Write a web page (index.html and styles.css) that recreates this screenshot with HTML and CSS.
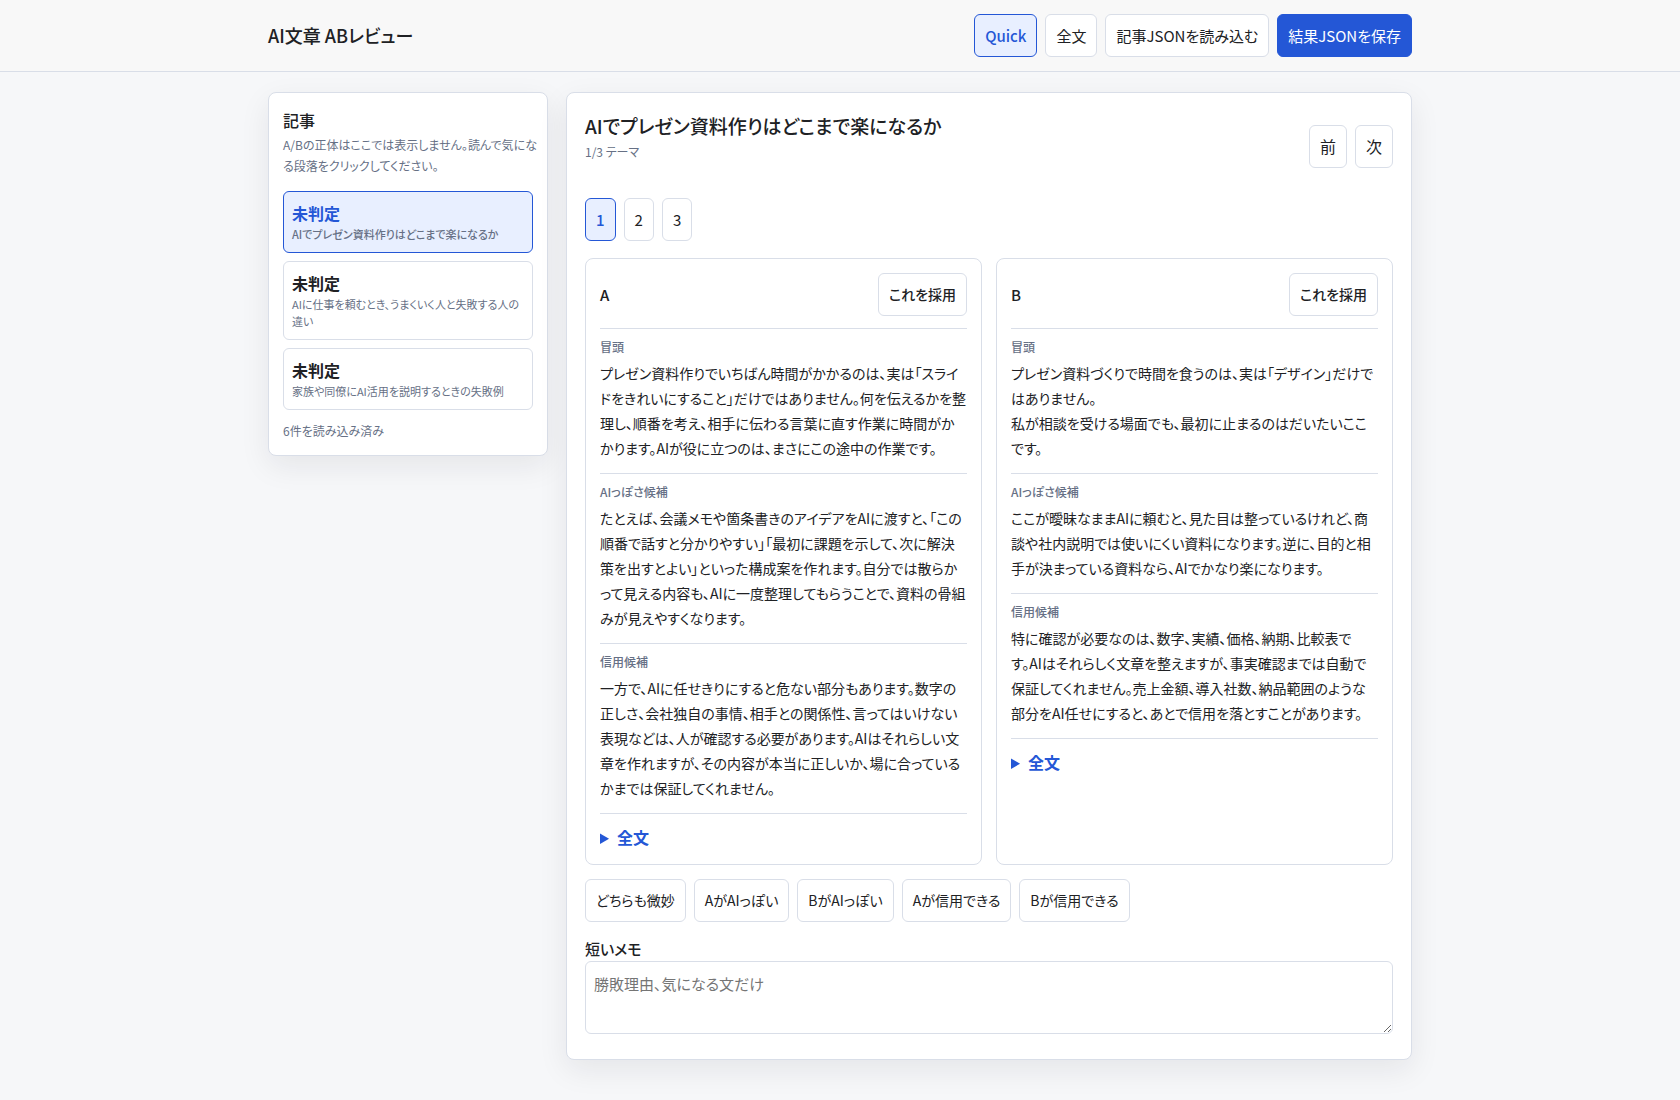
FILE: index.html
```html
<!DOCTYPE html>
<html lang="ja">
<head>
    <meta charset="UTF-8">
    <meta name="viewport" content="width=device-width, initial-scale=1">
    <title>AI文章 ABレビュー</title>
    <link rel="stylesheet" href="styles.css">
</head>
<body>
<header class="topbar">
    <div class="topbar-inner">
        <h1>AI文章 ABレビュー</h1>
        <div class="toolbar">
            <button type="button" class="active">Quick</button>
            <button type="button">全文</button>
            <button type="button">記事JSONを読み込む</button>
            <button type="button" class="primary">結果JSONを保存</button>
        </div>
    </div>
</header>

<main class="layout">
    <!-- Article list -->
    <aside class="panel sidebar">
        <h2>記事</h2>
        <p class="muted">A/Bの正体はここでは表示しません。読んで気にな<br>る段落をクリックしてください。</p>
        <div class="article-list">
            <button type="button" class="article active">
                <strong>未判定</strong>
                <span>AIでプレゼン資料作りはどこまで楽になるか</span>
            </button>
            <button type="button" class="article">
                <strong>未判定</strong>
                <span>AIに仕事を頼むとき、うまくいく人と失敗する人の<br>違い</span>
            </button>
            <button type="button" class="article">
                <strong>未判定</strong>
                <span>家族や同僚にAI活用を説明するときの失敗例</span>
            </button>
        </div>
        <p class="muted">6件を読み込み済み</p>
    </aside>

    <!-- Review area -->
    <section class="panel review">
        <div class="review-head">
            <div class="review-title">
                <h2>AIでプレゼン資料作りはどこまで楽になるか</h2>
                <p class="muted">1/3 テーマ</p>
            </div>
            <div class="toolbar">
                <button type="button">前</button>
                <button type="button">次</button>
            </div>
        </div>

        <div class="toolbar pager">
            <button type="button" class="active">1</button>
            <button type="button">2</button>
            <button type="button">3</button>
        </div>

        <div class="compare">
            <article class="version">
                <div class="version-head">
                    <h3>A</h3>
                    <button type="button">これを採用</button>
                </div>
                <div class="block">
                    <div class="block-label">冒頭</div>
                    <p>プレゼン資料作りでいちばん時間がかかるのは、実は「スライドをきれいにすること」だけではありません。何を伝えるかを整理し、順番を考え、相手に伝わる言葉に直す作業に時間がかかります。AIが役に立つのは、まさにこの途中の作業です。</p>
                </div>
                <div class="block">
                    <div class="block-label">AIっぽさ候補</div>
                    <p>たとえば、会議メモや箇条書きのアイデアをAIに渡すと、「この順番で話すと分かりやすい」「最初に課題を示して、次に解決策を出すとよい」といった構成案を作れます。自分では散らかって見える内容も、AIに一度整理してもらうことで、資料の骨組みが見えやすくなります。</p>
                </div>
                <div class="block">
                    <div class="block-label">信用候補</div>
                    <p>一方で、AIに任せきりにすると危ない部分もあります。数字の<br>正しさ、会社独自の事情、相手との関係性、言ってはいけない<br>表現などは、人が確認する必要があります。AIはそれらしい文<br>章を作れますが、その内容が本当に正しいか、場に合っているかまでは保証してくれません。</p>
                </div>
                <details>
                    <summary>全文</summary>
                </details>
            </article>

            <article class="version">
                <div class="version-head">
                    <h3>B</h3>
                    <button type="button">これを採用</button>
                </div>
                <div class="block">
                    <div class="block-label">冒頭</div>
                    <p>プレゼン資料づくりで時間を食うのは、実は「デザイン」だけではありません。<br>私が相談を受ける場面でも、最初に止まるのはだいたいここです。</p>
                </div>
                <div class="block">
                    <div class="block-label">AIっぽさ候補</div>
                    <p>ここが曖昧なままAIに頼むと、見た目は整っているけれど、商談や社内説明では使いにくい資料になります。逆に、目的と相手が決まっている資料なら、AIでかなり楽になります。</p>
                </div>
                <div class="block">
                    <div class="block-label">信用候補</div>
                    <p>特に確認が必要なのは、数字、実績、価格、納期、比較表で<br>す。AIはそれらしく文章を整えますが、事実確認までは自動で<br>保証してくれません。売上金額、導入社数、納品範囲のような<br>部分をAI任せにすると、あとで信用を落とすことがあります。</p>
                </div>
                <details>
                    <summary>全文</summary>
                </details>
            </article>
        </div>

        <div class="toolbar verdicts">
            <button type="button">どちらも微妙</button>
            <button type="button">AがAIっぽい</button>
            <button type="button">BがAIっぽい</button>
            <button type="button">Aが信用できる</button>
            <button type="button">Bが信用できる</button>
        </div>

        <label class="memo-label" for="memo">短いメモ</label>
        <textarea id="memo" placeholder="勝敗理由、気になる文だけ"></textarea>
    </section>
</main>
</body>
</html>
```

FILE: styles.css
```css
:root {
    --bg: #f6f7f9;
    --panel: #ffffff;
    --text: #202124;
    --muted: #667085;
    --line: #d9dee8;
    --accent: #2457d6;
    --accent-soft: #e8efff;
}

* {
    box-sizing: border-box;
}

body {
    margin: 0;
    background: var(--bg);
    color: var(--text);
    font-family: "Noto Sans CJK JP", sans-serif;
    font-feature-settings: "palt";
    font-size: 15px;
    line-height: 25px;
}

h1,
h2,
h3,
p {
    margin: 0;
}

button,
textarea {
    font: inherit;
    font-feature-settings: inherit;
    color: inherit;
}

button {
    padding: 8px 10px;
    border: 1px solid var(--line);
    border-radius: 6px;
    background: var(--panel);
    cursor: pointer;
}

button.active {
    border-color: var(--accent);
    background: var(--accent-soft);
    color: var(--accent);
    font-weight: 500;
}

button.primary {
    border-color: var(--accent);
    background: var(--accent);
    color: #fff;
}

.muted {
    color: var(--muted);
    font-size: 12px;
    line-height: 21px;
    white-space: nowrap;
}

.toolbar {
    display: flex;
    flex-wrap: wrap;
    gap: 8px;
}

/* Header */
.topbar {
    border-bottom: 1px solid var(--line);
    background: #f8f8f8;
}

.topbar-inner {
    display: flex;
    align-items: center;
    justify-content: space-between;
    gap: 16px;
    max-width: 1180px;
    margin: 0 auto;
    padding: 14px 18px;
}

.topbar h1 {
    font-size: 18px;
    font-weight: 500;
}

.layout {
    display: grid;
    grid-template-columns: 280px minmax(0, 1fr);
    align-items: start;
    gap: 18px;
    max-width: 1180px;
    margin: 0 auto;
    padding: 20px 18px 40px;
}

.panel {
    border: 1px solid var(--line);
    border-radius: 8px;
    background: var(--panel);
    box-shadow: 0 10px 30px rgba(20, 24, 32, 0.08);
}

/* Sidebar */
.sidebar {
    padding: 14px;
}

.sidebar h2 {
    font-size: 16px;
    font-weight: 500;
    line-height: 27px;
}

.article-list {
    display: grid;
    gap: 8px;
    margin: 15px 0 10px;
}

.article {
    display: block;
    width: 100%;
    padding: 9px 8px;
    text-align: left;
}

.article strong,
.article span {
    display: block;
}

.article strong {
    font-size: 16px;
    font-weight: 600;
}

.article span {
    color: var(--muted);
    font-size: 11px;
    line-height: 17px;
}

/* Review */
.review {
    padding: 18px;
}

.review-head {
    display: flex;
    align-items: center;
    justify-content: space-between;
    gap: 16px;
    margin-bottom: 16px;
}

.review-head button {
    font-size: 16px;
}

.review-title {
    padding-bottom: 20px;
}

.review-title h2 {
    font-size: 19px;
    font-weight: 500;
    line-height: 30px;
}

.pager {
    margin-bottom: 17px;
}

.compare {
    display: grid;
    grid-template-columns: repeat(2, minmax(0, 1fr));
    gap: 14px;
}

.version {
    padding: 14px;
    border: 1px solid var(--line);
    border-radius: 8px;
}

.version-head {
    display: flex;
    align-items: center;
    justify-content: space-between;
    padding-bottom: 12px;
}

.version-head h3 {
    font-size: 15px;
    font-weight: 500;
}

.version-head button {
    font-size: 14px;
    font-weight: 500;
}

.block {
    padding: 10px 0 12px;
    border-top: 1px solid var(--line);
}

.block-label {
    margin-bottom: 6px;
    color: var(--muted);
    font-size: 12px;
    font-weight: 500;
    line-height: 16px;
}

.block p {
    font-size: 14px;
}

details {
    padding-top: 11px;
    border-top: 1px solid var(--line);
}

summary {
    color: var(--accent);
    font-size: 16px;
    font-weight: 600;
    cursor: pointer;
}

.verdicts {
    margin: 14px 0;
    font-size: 14px;
}

.memo-label {
    display: block;
    font-weight: 500;
}

textarea {
    display: block;
    width: 100%;
    min-height: 73px;
    margin-bottom: 7px;
    padding: 9px 8px;
    border: 1px solid var(--line);
    border-radius: 6px;
    background: var(--panel);
    resize: vertical;
}
```
